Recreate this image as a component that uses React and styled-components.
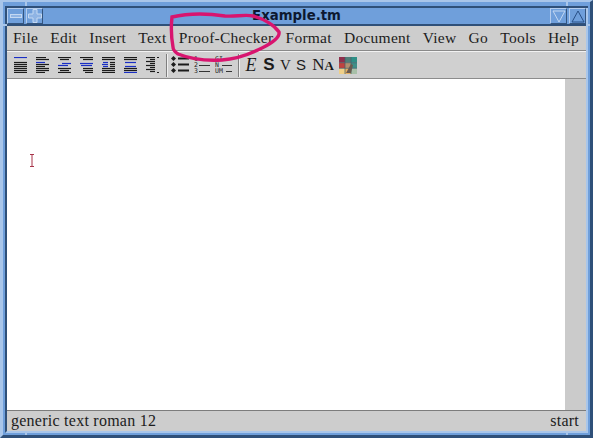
import React from "react";
import styled, { createGlobalStyle } from "styled-components";

const GlobalStyle = createGlobalStyle`
  html, body {
    margin: 0;
    padding: 0;
    background: #3f6596;
  }
`;

const serif = `"Liberation Serif", "Times New Roman", serif`;
const sans = `"Liberation Sans", Arial, sans-serif`;

const Frame = styled.div`
  position: relative;
  box-sizing: border-box;
  width: 593px;
  height: 438px;
  overflow: hidden;
  background: #6f9fdb;
  border-style: solid;
  border-width: 2px 3px 3px 3px;
  border-color: #a9c6ea #2f5079 #2f5079 #a9c6ea;
  display: flex;
  flex-direction: column;
`;

const Inner = styled.div`
  flex: 1;
  margin: 6px 2px 2px 2px;
  border: 2px solid;
  border-top-width: 0;
  border-color: #2f5079 #a9c6ea #a9c6ea #2f5079;
  box-shadow: 0 -2px 0 #2f5079;
  display: flex;
  flex-direction: column;
  min-height: 0;
`;

/* the cuts in the window border beside each corner */
const Notch = styled.div`
  position: absolute;
  background: ${(p) => p.$c || "#a9c6ea"};
  ${(p) => p.$at}
`;

const TitleBar = styled.div`
  height: 16px;
  display: flex;
  align-items: stretch;
  gap: 2px;
  background: #6f9fdb;
  border-bottom: 2px solid #2f5079;
`;

const WinButton = styled.div`
  width: 17px;
  display: flex;
  align-items: center;
  justify-content: center;
  border: 1px solid;
  border-color: #b4cdee #34557f #34557f #b4cdee;
  box-sizing: border-box;
`;

const Title = styled.div`
  flex: 1;
  text-align: center;
  font: bold 13.3px/16px "DejaVu Sans", sans-serif;
  color: #0d1830;
`;

const MenuBar = styled.div`
  height: 25px;
  box-sizing: border-box;
  display: flex;
  align-items: center;
  gap: 12.2px;
  padding: 0 0 1px 6px;
  background: #cdcdcd;
  border-bottom: 1px solid #8a8a8a;
  box-shadow: 0 1px 0 #f2f2f2;
  position: relative;
`;

const MenuItem = styled.span`
  font: 15.5px/20px ${serif};
  color: #1c1c1c;
  letter-spacing: 0.25px;
  white-space: nowrap;
`;

const ToolBar = styled.div`
  height: 26px;
  margin-top: 1px;
  display: flex;
  align-items: center;
  padding-left: 6px;
  background: #d0d0d0;
`;

const ToolGroup = styled.div`
  display: flex;
  align-items: center;
  gap: ${(p) => p.$gap}px;
`;

const Separator = styled.div`
  width: 1px;
  height: 23px;
  margin: 0 ${(p) => p.$right}px 0 ${(p) => p.$left}px;
  background: #7f7f7f;
  box-shadow: 1px 0 0 #f0f0f0;
`;

const Glyph = styled.span`
  display: block;
  width: ${(p) => p.$w}px;
  text-align: center;
  color: #1b1b1b;
  font-family: ${(p) => (p.$sans ? sans : serif)};
  font-size: ${(p) => p.$size || 17}px;
  line-height: 20px;
  font-weight: ${(p) => (p.$bold ? 700 : 400)};
  font-style: ${(p) => (p.$italic ? "italic" : "normal")};
  small {
    font-size: 13px;
    font-weight: 700;
  }
`;

const Middle = styled.div`
  flex: 1;
  display: flex;
  min-height: 0;
`;

const Canvas = styled.div`
  flex: 1;
  position: relative;
  background: #ffffff;
  border-top: 1px solid #8c8c8c;
`;

const Caret = styled.svg`
  position: absolute;
  left: 23px;
  top: 75px;
`;

const ScrollTrack = styled.div`
  width: 21px;
  background: #cbcbcb;
  border-top: 1px solid #8c8c8c;
`;

const StatusBar = styled.div`
  height: 21px;
  box-sizing: border-box;
  display: flex;
  align-items: center;
  justify-content: space-between;
  padding: 0 7px 0 4px;
  background: #cdcdcd;
  border-top: 1px solid #7c7c7c;
  font: 16px/20px ${serif};
  color: #1c1c1c;
  letter-spacing: 0.25px;
`;

const Scribble = styled.svg`
  position: absolute;
  left: -3px;
  top: -2px;
  pointer-events: none;
`;

const BLUE = "#1a2fc4";
const INK = "#1b1b1b";

// each line: [y, x1, x2, colour]
const alignIcons = [
  [[0, 1, 14, BLUE], [5, 1, 14], [7, 1, 14], [9, 1, 14], [11, 1, 14], [13, 1, 14], [15, 1, 14]],
  [[0, 1, 11], [2, 1, 14], [5, 1, 10, BLUE], [7, 1, 14], [9, 1, 10], [11, 1, 14], [13, 1, 14], [15, 1, 10]],
  [[0, 1, 14], [2, 3, 12], [6, 5, 14, BLUE], [8, 1, 11, BLUE], [11, 1, 14], [13, 3, 12], [15, 1, 14]],
  [[0, 1, 14], [2, 4, 14], [6, 1, 14, BLUE], [8, 2, 13, BLUE], [11, 4, 14], [13, 4, 14], [15, 6, 14]],
  [[0, 1, 14], [2, 1, 14], [5, 2, 7, BLUE], [5, 9, 14], [7, 1, 7, BLUE], [7, 9, 14], [9, 2, 7, BLUE], [9, 9, 14], [11, 1, 14], [13, 1, 14], [15, 1, 14]],
  [[0, 1, 14], [2, 1, 14], [5, 2, 13, BLUE], [9, 2, 13, BLUE], [11, 1, 14], [13, 1, 14], [15, 1, 14, BLUE]],
  [[0, 1, 10], [2, 5, 10], [4, 1, 10], [6, 5, 10], [8, 1, 10], [10, 5, 10], [12, 1, 10], [14, 5, 10], [0, 12, 14], [15, 12, 14]],
];

function AlignIcon({ lines }) {
  return (
    <svg width="15" height="16" viewBox="0 0 15 16">
      {lines.map(([y, x1, x2, c], i) => (
        <line key={i} x1={x1} x2={x2} y1={y + 0.5} y2={y + 0.5} stroke={c || INK} strokeWidth="1.2" />
      ))}
    </svg>
  );
}

function BulletList() {
  return (
    <svg width="18" height="18" viewBox="0 0 18 18">
      {[2, 8, 14].map((y) => (
        <g key={y}>
          <path d={`M2.5 ${y - 2}L5 ${y + 0.5}L2.5 ${y + 3}L0 ${y + 0.5}Z`} fill={INK} />
          <rect x="7" y={y - 0.5} width="11" height="2" fill={INK} />
        </g>
      ))}
    </svg>
  );
}

const TinyText = styled.text`
  font: 6.5px "DejaVu Sans Mono", monospace;
  fill: #222;
`;

function NumberList() {
  return (
    <svg width="18" height="20" viewBox="0 0 18 20">
      {["1", "2", "3"].map((n, i) => (
        <g key={n}>
          <TinyText x="1" y={6 + i * 6}>{n}</TinyText>
          <rect x="6" y={4 + i * 6} width="11" height="1" fill="#333" />
        </g>
      ))}
    </svg>
  );
}

function DescList() {
  return (
    <svg width="18" height="20" viewBox="0 0 18 20">
      {["GI", "N", "UM"].map((n, i) => (
        <g key={n}>
          <TinyText x="0" y={6 + i * 6}>{n}</TinyText>
          <rect x={i === 1 ? 7 : 11} y={4 + i * 6} width={i === 1 ? 10 : 6} height="1" fill="#333" />
        </g>
      ))}
    </svg>
  );
}

function Palette() {
  const cells = ["#8f2f4c", "#4f7f78", "#2f8f86", "#c0433f", "#b09070", "#3f8f88", "#f0d088", "#e8b060", "#a8c0a8"];
  return (
    <svg width="18" height="17" viewBox="0 0 18 17">
      {cells.map((c, i) => (
        <rect key={i} x={(i % 3) * 6} y={Math.floor(i / 3) * 5.67} width="6" height="5.67" fill={c} />
      ))}
      <path d="M0 5.7H18M0 11.3H18M6 0V17M12 0V17" stroke="#40606a" strokeWidth="0.7" />
      <path d="M7 16L12 7L14 8L12 16Z" fill="#6a5a50" />
    </svg>
  );
}

const menus = ["File", "Edit", "Insert", "Text", "Proof-Checker", "Format", "Document", "View", "Go", "Tools", "Help"];

export default function App() {
  return (
    <>
      <GlobalStyle />
      <Frame>
        <Inner>
          <TitleBar>
            <WinButton>
              <svg width="12" height="12" viewBox="0 0 12 12">
                <rect x="0.5" y="4.5" width="11" height="3" fill="#8fb4e4" stroke="#c3d8f2" />
              </svg>
            </WinButton>
            <WinButton>
              <svg width="14" height="14" viewBox="0 0 14 14">
                <path d="M5 .5H9V5H13.5V9H9V13.5H5V9H.5V5H5Z" fill="#8fb4e4" stroke="#c3d8f2" />
              </svg>
            </WinButton>
            <Title>Example.tm</Title>
            <WinButton>
              <svg width="14" height="13" viewBox="0 0 14 13">
                <path d="M1 1H13L7 12Z" fill="none" stroke="#c3d8f2" />
              </svg>
            </WinButton>
            <WinButton>
              <svg width="14" height="13" viewBox="0 0 14 13">
                <path d="M1 12H13L7 1Z" fill="none" stroke="#274f86" />
              </svg>
            </WinButton>
          </TitleBar>
          <MenuBar>
            {menus.map((m) => (
              <MenuItem key={m}>{m}</MenuItem>
            ))}
          </MenuBar>
          <ToolBar>
            <ToolGroup $gap={7}>
              {alignIcons.map((lines, i) => (
                <AlignIcon key={i} lines={lines} />
              ))}
            </ToolGroup>
            <Separator $left={6} $right={4} />
            <ToolGroup $gap={4}>
              <BulletList />
              <NumberList />
              <DescList />
            </ToolGroup>
            <Separator $left={5} $right={5} />
            <ToolGroup $gap={5}>
              <Glyph $w={14} $italic $size={18}>E</Glyph>
              <Glyph $w={12} $bold $sans $size={17}>S</Glyph>
              <Glyph $w={10} $size={15}>V</Glyph>
              <Glyph $w={12} $sans $size={15}>S</Glyph>
              <Glyph $w={22}>N<small>A</small></Glyph>
              <Palette />
            </ToolGroup>
          </ToolBar>
          <Middle>
            <Canvas>
              <Caret width="4" height="13" viewBox="0 0 4 13">
                <path d="M0 .5H4M2 .5V12.5M0 12.5H4" stroke="#a8354a" fill="none" />
              </Caret>
            </Canvas>
            <ScrollTrack />
          </Middle>
          <StatusBar>
            <span>generic text roman 12</span>
            <span>start</span>
          </StatusBar>
        </Inner>
        <Notch $at="left: 22px; top: -2px; width: 2px; height: 6px;" />
        <Notch $at="right: 22px; top: -2px; width: 2px; height: 6px;" />
        <Notch $at="left: 22px; bottom: -3px; width: 2px; height: 5px;" />
        <Notch $at="right: 22px; bottom: -3px; width: 2px; height: 5px;" />
        <Notch $at="left: -3px; top: 22px; width: 7px; height: 2px;" />
        <Notch $at="right: -3px; top: 22px; width: 6px; height: 2px;" />
        <Scribble width="593" height="438">
          <path
            d="M173 47C171 36 171 26 172 17C185 14 205 13 225 16C235 17 245 14 253 16C265 19 275 26 279 32C280 37 272 43 262 48C250 54 238 59 222 60C205 61 188 58 178 54C175 52 173 50 173 47"
            fill="none"
            stroke="#d8156f"
            strokeWidth="3.4"
            strokeLinecap="round"
          />
        </Scribble>
      </Frame>
    </>
  );
}
